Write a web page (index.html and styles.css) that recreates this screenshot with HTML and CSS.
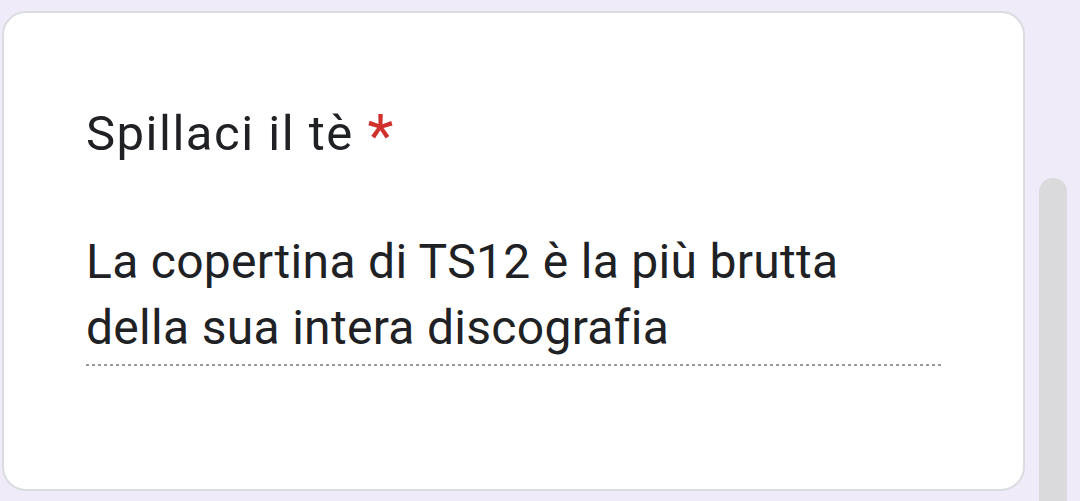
FILE: index.html
```html
<!DOCTYPE html>
<html>
<head>
  <meta charset="UTF-8">
  <title>Spillaci il tè</title>
  <link rel="stylesheet" href="styles.css">
</head>
<body>
  <div class="page">
    <div class="card">
      <div class="question">Spillaci il tè <span class="required">*</span></div>
      <div class="answer">
        <div class="answer-text">La copertina di TS12 è la più brutta della sua intera discografia</div>
      </div>
    </div>
    <div class="scrollbar">
      <div class="thumb"></div>
    </div>
  </div>
</body>
</html>
```

FILE: styles.css
```css
body {
  margin: 0;
  background-color: #efebf8;
  font-family: Roboto, "Noto Sans", sans-serif;
  color: #202124;
}
.page {
  display: flex;
  height: 501px;
  overflow: hidden;
}
.card {
  margin: 11px 0 0 2px;
  width: 1023px;
  height: 480px;
  box-sizing: border-box;
  background-color: #fff;
  border: 2px solid #dadce0;
  border-radius: 24px;
  padding: 94px 80px 0 82px;
}
.question {
  font-size: 49px;
  line-height: 54px;
  letter-spacing: 1.5px;
}
.required {
  color: #d0312d;
  font-size: 60px;
  line-height: 0;
  vertical-align: -6px;
}
.answer {
  margin-top: 68px;
  width: 858px;
  padding-bottom: 5px;
  background-image: repeating-linear-gradient(to right, #9a9a9a 0 3px, transparent 3px 6px);
  background-size: 100% 2px;
  background-repeat: no-repeat;
  background-position: bottom left;
}
.answer-text {
  font-size: 48px;
  line-height: 66px;
  letter-spacing: 0.3px;
  max-width: 800px;
}
.scrollbar {
  margin-left: 14px;
  padding-top: 178px;
}
.thumb {
  width: 28px;
  height: 400px;
  background-color: #dadadd;
  border-radius: 14px;
}
```
